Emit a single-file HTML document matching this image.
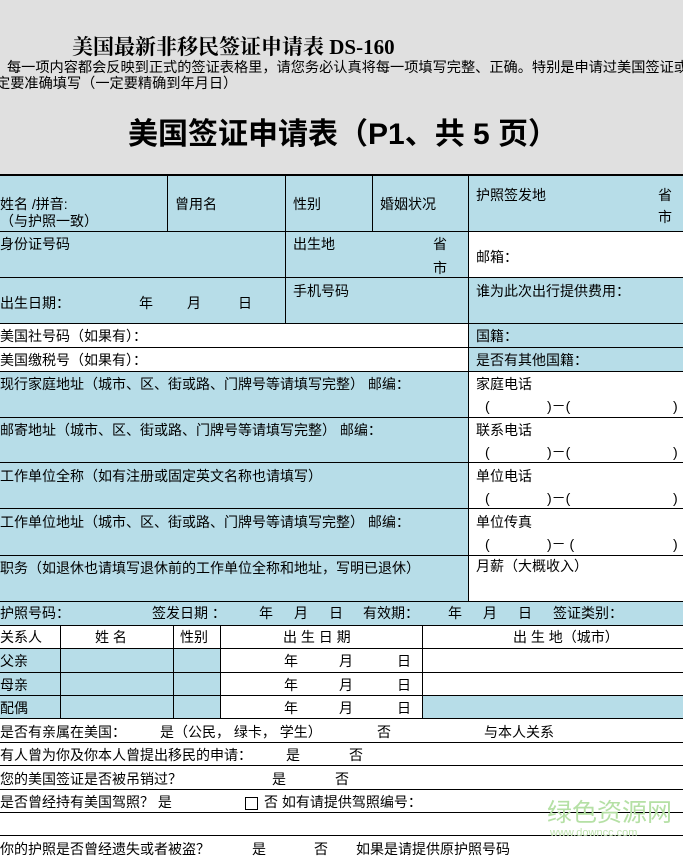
<!DOCTYPE html>
<html><head><meta charset="utf-8"><style>
body{margin:0;width:683px;height:854px;overflow:hidden;position:relative;background:#fff;font-family:"Liberation Sans","Noto Sans CJK SC",sans-serif;color:#000}
div{position:absolute}
.b{background:#b7dde8}
.w{background:#fff}
.h{height:1px;background:#000;left:0;width:683px}
.v{width:1px;background:#000}
.t{font-size:14px;line-height:16px;white-space:nowrap}
</style></head><body>
<div style="left:0;top:0;width:683px;height:175px;background:#e0e0e0"></div>
<div class="t" style="left:72px;top:35px;font-size:21px;line-height:24px;font-weight:bold;font-family:'Liberation Serif','Noto Serif CJK SC',serif">美国最新非移民签证申请表 DS-160</div>
<div class="t" style="left:3px;top:60px;font-size:14.2px">&nbsp;每一项内容都会反映到正式的签证表格里，请您务必认真将每一项填写完整、正确。特别是申请过美国签证或被</div>
<div class="t" style="left:-4px;top:76px;font-size:14.2px">定要准确填写（一定要精确到年月日）</div>
<div class="t" style="left:128px;top:117px;font-size:30px;line-height:36px;font-weight:bold">美国签证申请表（P1、共 5 页）</div>

<div class="b" style="left:0;top:175px;width:683px;height:148px"></div>
<div class="w" style="left:468px;top:231px;width:215px;height:46px"></div>
<div class="w" style="left:0;top:323px;width:468px;height:48px"></div>
<div class="b" style="left:468px;top:323px;width:215px;height:48px"></div>
<div class="b" style="left:0;top:371px;width:468px;height:230px"></div>
<div class="w" style="left:468px;top:371px;width:215px;height:230px"></div>
<div class="b" style="left:0;top:601px;width:683px;height:24px"></div>
<div class="b" style="left:0;top:648px;width:220px;height:70px"></div>
<div class="b" style="left:422px;top:695px;width:261px;height:23px"></div>

<div class="h" style="top:174px;height:2px"></div>
<div class="h" style="top:231px"></div>
<div class="h" style="top:277px"></div>
<div class="h" style="top:323px"></div>
<div class="h" style="top:347px"></div>
<div class="h" style="top:371px"></div>
<div class="h" style="top:417px"></div>
<div class="h" style="top:462px"></div>
<div class="h" style="top:508px"></div>
<div class="h" style="top:555px"></div>
<div class="h" style="top:601px"></div>
<div class="h" style="top:625px"></div>
<div class="h" style="top:648px"></div>
<div class="h" style="top:672px"></div>
<div class="h" style="top:695px"></div>
<div class="h" style="top:718px"></div>
<div class="h" style="top:742px"></div>
<div class="h" style="top:765px"></div>
<div class="h" style="top:789px"></div>
<div class="h" style="top:812px"></div>
<div class="h" style="top:835px"></div>

<div class="v" style="left:167px;top:175px;height:56px"></div>
<div class="v" style="left:285px;top:175px;height:148px"></div>
<div class="v" style="left:372px;top:175px;height:56px"></div>
<div class="v" style="left:468px;top:175px;height:426px"></div>
<div class="v" style="left:60px;top:625px;height:93px"></div>
<div class="v" style="left:173px;top:625px;height:93px"></div>
<div class="v" style="left:220px;top:625px;height:93px"></div>
<div class="v" style="left:422px;top:625px;height:93px"></div>

<div class="t" style="left:0;top:196px">姓名 /拼音:</div>
<div class="t" style="left:0;top:213px">（与护照一致）</div>
<div class="t" style="left:175px;top:196px">曾用名</div>
<div class="t" style="left:293px;top:196px">性别</div>
<div class="t" style="left:380px;top:196px">婚姻状况</div>
<div class="t" style="left:476px;top:187px">护照签发地</div>
<div class="t" style="left:658px;top:187px">省</div>
<div class="t" style="left:658px;top:209px">市</div>

<div class="t" style="left:0;top:236px">身份证号码</div>
<div class="t" style="left:293px;top:236px">出生地</div>
<div class="t" style="left:433px;top:236px">省</div>
<div class="t" style="left:433px;top:260px">市</div>
<div class="t" style="left:476px;top:249px">邮箱：</div>

<div class="t" style="left:0;top:295px">出生日期：</div>
<div class="t" style="left:139px;top:295px">年</div>
<div class="t" style="left:187px;top:295px">月</div>
<div class="t" style="left:238px;top:295px">日</div>
<div class="t" style="left:293px;top:283px">手机号码</div>
<div class="t" style="left:476px;top:283px">谁为此次出行提供费用：</div>

<div class="t" style="left:0;top:328px">美国社号码（如果有）：</div>
<div class="t" style="left:476px;top:328px">国籍：</div>
<div class="t" style="left:0;top:352px">美国缴税号（如果有）：</div>
<div class="t" style="left:476px;top:352px">是否有其他国籍：</div>

<div class="t" style="left:0;top:376px">现行家庭地址（城市、区、街或路、门牌号等请填写完整） 邮编：</div>
<div class="t" style="left:476px;top:376px">家庭电话</div>
<div class="t" style="left:0;top:422px">邮寄地址（城市、区、街或路、门牌号等请填写完整） 邮编：</div>
<div class="t" style="left:476px;top:422px">联系电话</div>
<div class="t" style="left:0;top:468px">工作单位全称（如有注册或固定英文名称也请填写）</div>
<div class="t" style="left:476px;top:468px">单位电话</div>
<div class="t" style="left:0;top:514px">工作单位地址（城市、区、街或路、门牌号等请填写完整） 邮编：</div>
<div class="t" style="left:476px;top:514px">单位传真</div>
<div class="t" style="left:0;top:560px">职务（如退休也请填写退休前的工作单位全称和地址，写明已退休）</div>
<div class="t" style="left:476px;top:558px">月薪（大概收入）</div>

<div class="t" style="left:485px;top:398px">(</div><div class="t" style="left:547px;top:398px">)－(</div><div class="t" style="left:673px;top:398px">)</div>
<div class="t" style="left:485px;top:444px">(</div><div class="t" style="left:547px;top:444px">)－(</div><div class="t" style="left:673px;top:444px">)</div>
<div class="t" style="left:485px;top:490px">(</div><div class="t" style="left:547px;top:490px">)－(</div><div class="t" style="left:673px;top:490px">)</div>
<div class="t" style="left:485px;top:536px">(</div><div class="t" style="left:547px;top:536px">)－ (</div><div class="t" style="left:673px;top:536px">)</div>

<div class="t" style="left:0;top:605px">护照号码：</div>
<div class="t" style="left:152px;top:605px">签发日期 ：</div>
<div class="t" style="left:259px;top:605px">年</div>
<div class="t" style="left:294px;top:605px">月</div>
<div class="t" style="left:329px;top:605px">日</div>
<div class="t" style="left:363px;top:605px">有效期：</div>
<div class="t" style="left:448px;top:605px">年</div>
<div class="t" style="left:483px;top:605px">月</div>
<div class="t" style="left:518px;top:605px">日</div>
<div class="t" style="left:553px;top:605px">签证类别：</div>

<div class="t" style="left:0;top:629px">关系人</div>
<div class="t" style="left:95px;top:629px">姓 名</div>
<div class="t" style="left:180px;top:629px">性别</div>
<div class="t" style="left:283px;top:629px">出 生 日 期</div>
<div class="t" style="left:513px;top:629px">出 生 地（城市）</div>
<div class="t" style="left:0;top:653px">父亲</div>
<div class="t" style="left:0;top:677px">母亲</div>
<div class="t" style="left:0;top:700px">配偶</div>
<div class="t" style="left:284px;top:653px">年</div><div class="t" style="left:339px;top:653px">月</div><div class="t" style="left:397px;top:653px">日</div>
<div class="t" style="left:284px;top:677px">年</div><div class="t" style="left:339px;top:677px">月</div><div class="t" style="left:397px;top:677px">日</div>
<div class="t" style="left:284px;top:700px">年</div><div class="t" style="left:339px;top:700px">月</div><div class="t" style="left:397px;top:700px">日</div>

<div class="t" style="left:0;top:724px">是否有亲属在美国：</div>
<div class="t" style="left:160px;top:724px">是（公民，&nbsp;绿卡，&nbsp;学生）</div>
<div class="t" style="left:377px;top:724px">否</div>
<div class="t" style="left:484px;top:724px">与本人关系</div>
<div class="t" style="left:0;top:747px">有人曾为你及你本人曾提出移民的申请：</div>
<div class="t" style="left:286px;top:747px">是</div>
<div class="t" style="left:349px;top:747px">否</div>
<div class="t" style="left:0;top:771px">您的美国签证是否被吊销过？</div>
<div class="t" style="left:272px;top:771px">是</div>
<div class="t" style="left:335px;top:771px">否</div>
<div class="t" style="left:0;top:794px">是否曾经持有美国驾照？ 是</div>
<div style="left:245px;top:797px;width:11px;height:11px;border:1px solid #000"></div>
<div class="t" style="left:264px;top:794px">否 如有请提供驾照编号：</div>
<div class="t" style="left:0;top:841px">你的护照是否曾经遗失或者被盗？</div>
<div class="t" style="left:252px;top:841px">是</div>
<div class="t" style="left:314px;top:841px">否</div>
<div class="t" style="left:356px;top:841px">如果是请提供原护照号码</div>

<div class="t" style="left:547px;top:799px;font-size:25px;line-height:28px;color:#b5e0a5">绿色资源网</div>
<div class="t" style="left:550px;top:827px;font-size:11px;line-height:12px;color:#c0e4b0">www.downcc.com</div>
</body></html>
